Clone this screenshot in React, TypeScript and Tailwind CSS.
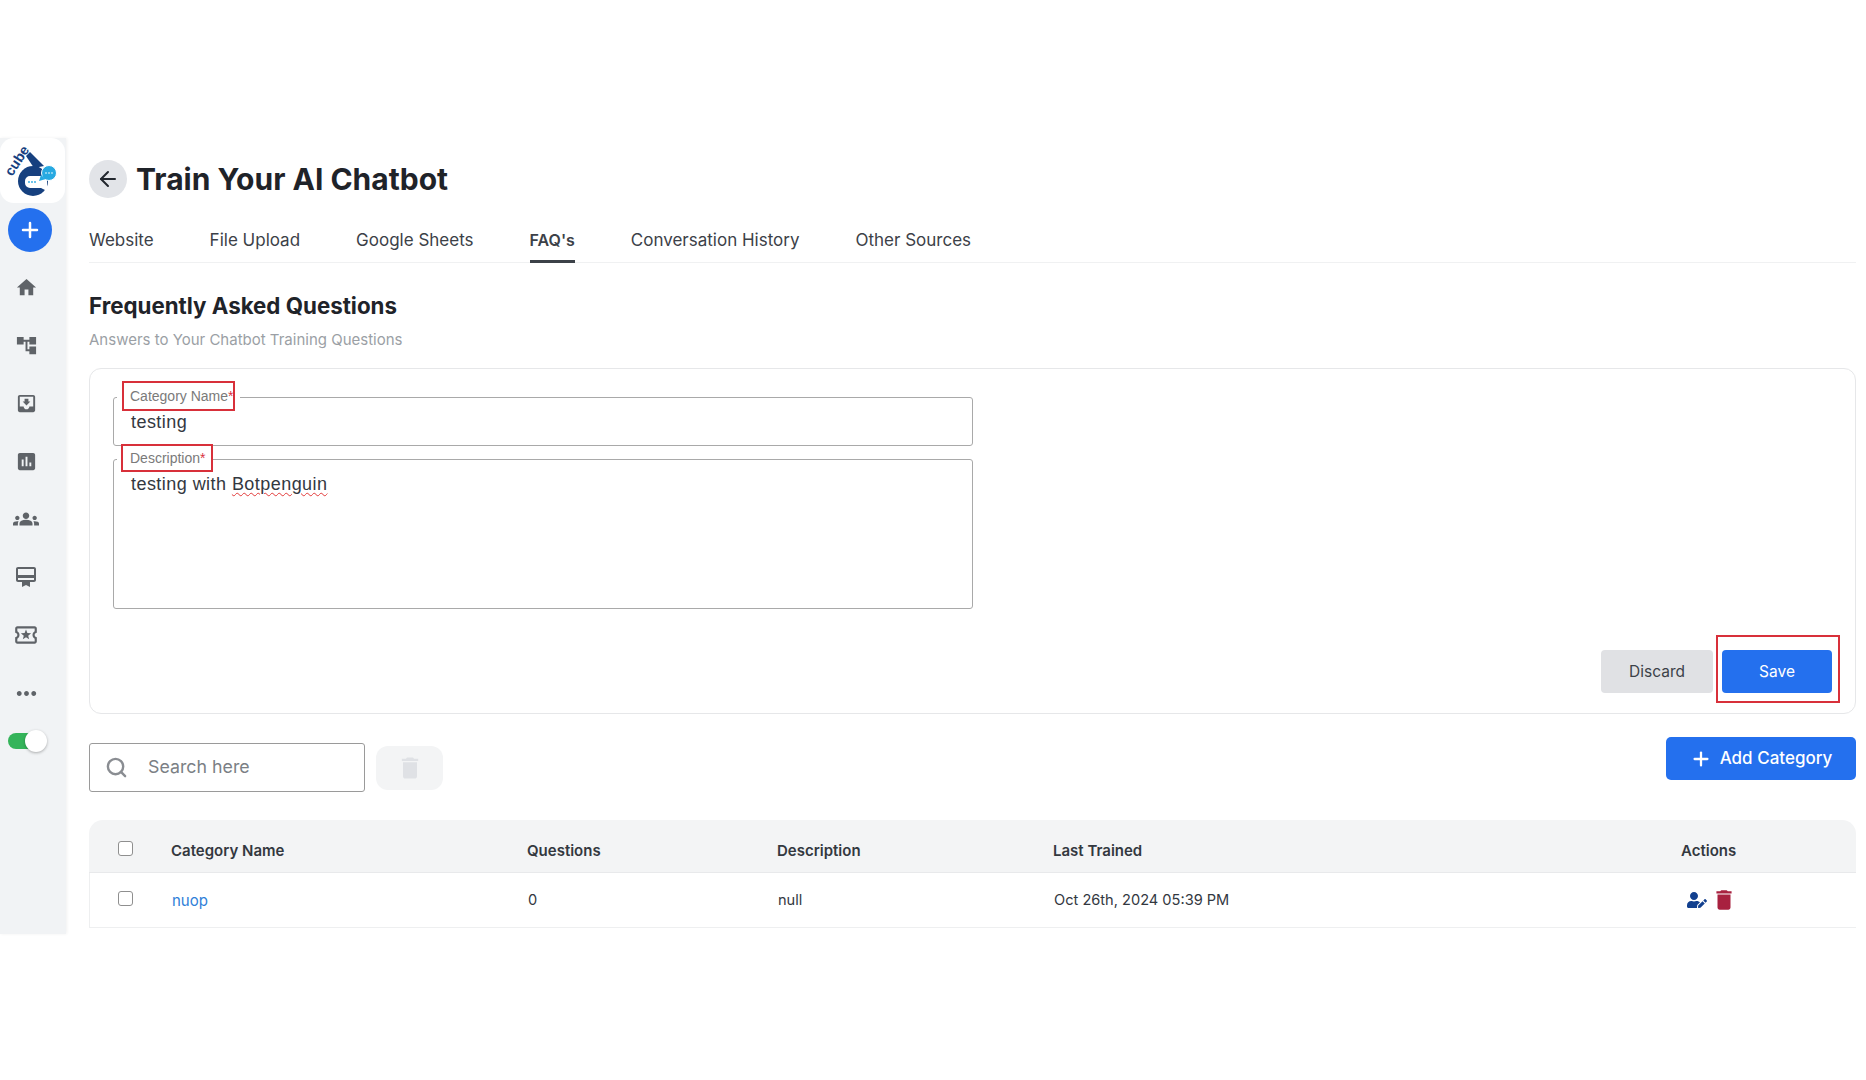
import { ArrowLeft, Plus, Search } from "lucide-react";
import { FaUserEdit } from "react-icons/fa";
import {
  MdAccountTree,
  MdCardMembership,
  MdDelete,
  MdGroups,
  MdHome,
  MdInsertChart,
  MdMoreHoriz,
  MdMoveToInbox,
  MdOutlineLocalActivity,
} from "react-icons/md";

const tabs = ["Website", "File Upload", "Google Sheets", "FAQ's", "Conversation History", "Other Sources"];

const navIcons = [
  { icon: MdHome, size: 23 },
  { icon: MdAccountTree, size: 23 },
  { icon: MdMoveToInbox, size: 23 },
  { icon: MdInsertChart, size: 23 },
  { icon: MdGroups, size: 26 },
  { icon: MdCardMembership, size: 24 },
  { icon: MdOutlineLocalActivity, size: 26 },
  { icon: MdMoreHoriz, size: 29 },
];

function Logo() {
  return (
    <svg viewBox="0 0 65 65" className="w-[65px] h-[65px]">
      <path d="M26 18 L30 14 L44 28 L34 30 Z" fill="#16407f" />
      <circle cx="33" cy="43" r="15" fill="#16407f" />
      <path d="M30 38 H44 A3 3 0 0 1 47 41 V53 L41 50 H30 A5 5 0 0 1 25 45 V43 A5 5 0 0 1 30 38 Z" fill="#ffffff" />
      <circle cx="29" cy="44" r="0.9" fill="#27a9e1" />
      <circle cx="32" cy="44" r="0.9" fill="#27a9e1" />
      <circle cx="35" cy="44" r="0.9" fill="#27a9e1" />
      <circle cx="49" cy="35" r="7.5" fill="#27a9e1" stroke="#ffffff" strokeWidth="1" />
      <path d="M41 37 L39 43 L46 41 Z" fill="#27a9e1" />
      <circle cx="46" cy="35" r="0.8" fill="#ffffff" />
      <circle cx="49" cy="35" r="0.8" fill="#ffffff" />
      <circle cx="52" cy="35" r="0.8" fill="#ffffff" />
      <text
        x="0"
        y="0"
        transform="translate(12 39) rotate(-57)"
        fontFamily="Liberation Sans, sans-serif"
        fontWeight="700"
        fontSize="14"
        fill="#16407f"
      >
        cube
      </text>
    </svg>
  );
}

function Sidebar() {
  return (
    <aside className="w-[66px] h-[796px] shrink-0 bg-[#f1f3f5] shadow-[1px_0_3px_rgba(0,0,0,0.06)] flex flex-col">
      <div className="w-[65px] h-[65px] bg-white rounded-[14px]">
        <Logo />
      </div>
      <button className="ml-2 mt-[5px] w-11 h-11 rounded-full bg-[#2470ee] flex items-center justify-center text-white">
        <Plus size={24} strokeWidth={2.5} />
      </button>
      <div className="mt-[6px] w-[52px] flex flex-col">
        {navIcons.map((item, i) => (
          <div key={i} className="h-[58px] flex items-center justify-center text-[#5f6368]">
            <item.icon size={item.size} />
          </div>
        ))}
      </div>
      <div className="relative ml-2 mt-[8px] w-[39px] h-[22px] flex items-center">
        <div className="w-[30px] h-[16px] rounded-full bg-[#34b45a]" />
        <div className="absolute right-0 top-0 w-[22px] h-[22px] rounded-full bg-white shadow-[0_1px_3px_rgba(0,0,0,0.3)]" />
      </div>
    </aside>
  );
}

function OutlinedField({
  label,
  heightClass,
  boxClass,
  children,
}: {
  label: string;
  heightClass: string;
  boxClass: string;
  children: React.ReactNode;
}) {
  return (
    <div className={`relative w-[860px] ${heightClass} border border-[#a9a9a9] rounded-[3px] pl-[17px] font-['Liberation_Sans',sans-serif] text-[18px] text-[#33383f] tracking-[0.45px]`}>
      <span className="absolute left-[3px] -top-[12px] h-5 bg-white pl-[13px] pr-[6px] text-[14px] leading-5 text-[#7a7a7a] tracking-normal">
        {label}
        <span className="text-[#d9343f]">*</span>
      </span>
      <span className={`absolute border-[2px] border-[#d8303a] ${boxClass}`} />
      {children}
    </div>
  );
}

function Table() {
  const grid = "grid grid-cols-[82px_356px_250px_276px_628px_1fr] items-center";
  return (
    <div className="mt-[28px] text-[15px] text-[#33383f]">
      <div className={`${grid} h-[53px] pt-[11px] bg-[#f3f4f5] rounded-t-[14px] border-b border-[#e8e9eb] font-semibold`}>
        <div className="pl-[29px] -mt-[7px]">
          <div className="w-[15px] h-[15px] rounded-[3px] border border-[#8f8f8f] bg-white" />
        </div>
        <div>Category Name</div>
        <div>Questions</div>
        <div>Description</div>
        <div>Last Trained</div>
        <div>Actions</div>
      </div>
      <div className={`${grid} h-[55px] pt-[2px] border-b border-l border-[#eeeff0] text-[14.6px]`}>
        <div className="pl-[28px] -mt-[5px]">
          <div className="w-[15px] h-[15px] rounded-[3px] border border-[#8f8f8f] bg-white" />
        </div>
        <div className="text-[15px] text-[#2f80d8]">nuop</div>
        <div>0</div>
        <div>null</div>
        <div>Oct 26th, 2024 05:39 PM</div>
        <div className="flex items-center gap-[8px] pl-[5px] -mt-[2px]">
          <FaUserEdit size={20} className="text-[#12408f]" />
          <MdDelete size={26} className="text-[#a8213f] -ml-1" />
        </div>
      </div>
    </div>
  );
}

export default function App() {
  return (
    <div className="w-[1866px] h-[1080px] bg-white overflow-hidden pt-[138px] flex font-['Inter',sans-serif] text-[#1f2329]">
      <Sidebar />
      <main className="flex-1 pl-[23px] pr-[10px]">
        <div className="mt-[22px] flex items-center gap-[9px] h-[38px]">
          <button className="w-[38px] h-[38px] rounded-full bg-[#e2e4e8] flex items-center justify-center text-[#22272e]">
            <ArrowLeft size={24} strokeWidth={2} />
          </button>
          <h1 className="text-[30px] leading-[38px] font-bold text-[#1f2329]">Train Your AI Chatbot</h1>
        </div>

        <div className="mt-[23px] h-[42px] flex gap-[56px] border-b border-[#f0f1f2] text-[17px] text-[#3c4148]">
          {tabs.map((tab) => (
            <div
              key={tab}
              className={
                tab === "FAQ's"
                  ? "h-[42px] pt-[7px] border-b-[3px] border-[#3c4148] text-[16px] font-semibold"
                  : "h-[42px] pt-[7px]"
              }
            >
              {tab}
            </div>
          ))}
        </div>

        <h2 className="mt-[30px] text-[22.3px] leading-[26px] font-bold text-[#1f2329]">Frequently Asked Questions</h2>
        <p className="mt-[11px] text-[15px] leading-5 text-[#9b9fa5]">Answers to Your Chatbot Training Questions</p>

        <section className="mt-[18px] h-[346px] border border-[#e6e7e9] rounded-[12px] pt-[28px] px-[23px]">
          <OutlinedField label="Category Name" heightClass="h-[49px] pt-[11px]" boxClass="left-[8px] -top-[17px] w-[113px] h-[30px]">
            testing
          </OutlinedField>
          <div className="mt-[13px]">
            <OutlinedField label="Description" heightClass="h-[150px] pt-[11px]" boxClass="left-[7px] -top-[16px] w-[92px] h-[28px]">
              testing with <span className="underline decoration-wavy decoration-[#e23a3a] decoration-1 underline-offset-2">Botpenguin</span>
            </OutlinedField>
          </div>
          <div className="relative mt-[41px] flex justify-end gap-[9px] text-[15.5px]">
            <button className="w-[112px] h-[43px] rounded-[4px] bg-[#e0e1e4] text-[#3c4148]">Discard</button>
            <button className="w-[110px] h-[43px] rounded-[4px] bg-[#2470ee] text-white">Save</button>
            <span className="absolute right-[-8px] -top-[15px] w-[124px] h-[68px] border-[2px] border-[#d8303a]" />
          </div>
        </section>

        <div className="mt-[23px] flex justify-between items-start">
          <div className="mt-[6px] flex items-center gap-[11px]">
            <div className="w-[276px] h-[49px] border border-[#9a9a9a] rounded-[3px] flex items-center pl-[15px] gap-[20px] text-[#7b7f85] text-[17.8px]">
              <Search size={23} strokeWidth={2.5} className="text-[#8a8d92]" />
              <span>Search here</span>
            </div>
            <button className="w-[67px] h-[44px] rounded-[12px] bg-[#f3f4f5] flex items-center justify-center text-[#dfe1e5]">
              <MdDelete size={28} />
            </button>
          </div>
          <button className="w-[190px] h-[43px] rounded-[5px] bg-[#2470ee] text-white flex items-center justify-center gap-[8px] text-[17px] font-medium pt-[1px]">
            <Plus size={22} strokeWidth={2.5} />
            Add Category
          </button>
        </div>

        <Table />
      </main>
    </div>
  );
}
